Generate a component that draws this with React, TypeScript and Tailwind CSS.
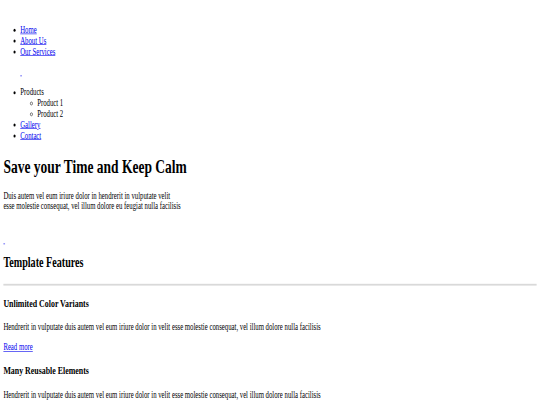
export default function App() {
  return (
    <div className="w-[540px] h-[405px] overflow-hidden bg-white">
      <div className="w-[1280px] origin-top-left scale-x-[0.421875] scale-y-[0.6] p-2 font-['Liberation_Serif',serif] text-base leading-[normal] text-black">
        <header className="pt-[17px]">
          <nav>
            <ul className="list-disc pl-10 my-4">
              <li><a href="#" className="text-[#0000ee] underline">Home</a></li>
              <li><a href="#" className="text-[#0000ee] underline">About Us</a></li>
              <li><a href="#" className="text-[#0000ee] underline">Our Services</a></li>
            </ul>
            <div className="pl-10">
              <a href="#" className="text-[#0000ee] underline">&nbsp;</a>
            </div>
            <ul className="list-disc pl-10 my-4">
              <li>
                Products
                <ul className="list-[circle] pl-10">
                  <li>Product 1</li>
                  <li>Product 2</li>
                </ul>
              </li>
              <li><a href="#" className="text-[#0000ee] underline">Gallery</a></li>
              <li><a href="#" className="text-[#0000ee] underline">Contact</a></li>
            </ul>
          </nav>
        </header>

        <section>
          <h1 className="text-[32px] font-bold mt-6 mb-[21.44px]">Save your Time and Keep Calm</h1>
          <p className="my-4">
            Duis autem vel eum iriure dolor in hendrerit in vulputate velit
            <br />
            esse molestie consequat, vel illum dolore eu feugiat nulla facilisis
          </p>
          <div className="pt-[22px]">
            <a href="#" className="text-[#0000ee] underline">&nbsp;</a>
          </div>
        </section>

        <section>
          <h2 className="text-2xl font-bold mt-[12px] mb-5">Template Features</h2>
          <hr className="border-t-[3px] border-[#d9d9d9] mt-2 mb-[11px]" />
          <h3 className="text-[18.72px] font-bold my-[18.72px]">Unlimited Color Variants</h3>
          <p className="my-4">
            Hendrerit in vulputate duis autem vel eum iriure dolor in velit esse molestie consequat, vel illum dolore nulla facilisis
          </p>
          <p className="my-4">
            <a href="#" className="text-[#0000ee] underline">Read more</a>
          </p>
          <h3 className="text-[18.72px] font-bold my-[18.72px]">Many Reusable Elements</h3>
          <p className="mt-5 mb-4">
            Hendrerit in vulputate duis autem vel eum iriure dolor in velit esse molestie consequat, vel illum dolore nulla facilisis
          </p>
        </section>
      </div>
    </div>
  );
}
